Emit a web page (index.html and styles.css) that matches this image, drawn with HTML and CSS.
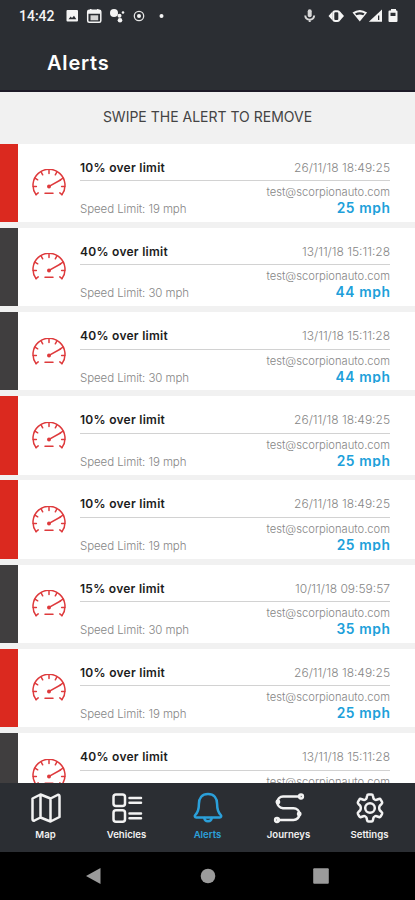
FILE: index.html
```html
<!DOCTYPE html>
<html lang="en">

<head>
    <meta charset="UTF-8">
    <meta name="viewport" content="width=device-width, initial-scale=1.0">
    <title>Alerts</title>
    <link rel="stylesheet" href="styles.css">
</head>

<body>
    <!-- shared speedometer icon -->
    <svg class="defs" width="0" height="0">
        <symbol id="gauge" viewBox="0 0 34 28">
            <g fill="none" stroke="#de3a3c" stroke-width="1.5" stroke-linecap="round">
                <path d="M4 25.6A16 16 0 1 1 30 25.6" />
                <path d="M4 25.6l2.2-1.7M30 25.6l-2.2-1.7M1.2 17.5h3.2M32.8 17.5h-3.2M3 9.2l2.7 1.6M9.2 3.2l1.5 2.6M17 1v3.6M24.8 3.2l-1.5 2.6M31 9.2l-2.7 1.6" />
                <path d="M17.5 17.2L28.5 11M13 24.3h8" />
            </g>
            <circle cx="17" cy="17.6" r="2" fill="#de3a3c" />
        </symbol>
    </svg>

    <div class="phone">
        <div class="status">
            <span class="time">14:42</span>
            <svg class="status-left" width="100" height="16" viewBox="0 0 100 16" fill="#f4f4f4">
                <path fill-rule="evenodd" d="M1.500 2h9.500q1 0 1 1v9.500q0 1-1 1H1.500q-1 0-1-1V3q0-1 1-1zM2.500 11.300h7.800L8 7.800l-2 2.300-1.300-1.500z" />
                <rect x="21.700" y="2.200" width="13.100" height="12" rx="1.500" fill="none" stroke="#f4f4f4" stroke-width="1.500" />
                <path d="M22 3h12.500v2.700H22zM24 1h1.500v2H24zM31 1h1.500v2H31z" />
                <path d="M24.500 7.300h7.700v5h-7.700z" fill="#d4d4d4" />
                <circle cx="48" cy="5" r="4" />
                <circle cx="53.500" cy="7.800" r="2" />
                <circle cx="57" cy="4.500" r="1.300" />
                <circle cx="54" cy="12.300" r="2.300" />
                <circle cx="73" cy="8" r="4.700" fill="none" stroke="#e4e4e4" stroke-width="1.300" />
                <circle cx="73" cy="8" r="2" />
                <circle cx="95.500" cy="8" r="2" />
            </svg>
            <svg class="status-right" width="96" height="16" viewBox="0 0 96 16" fill="#f4f4f4">
                <rect x="4.700" y="1.200" width="4" height="8" rx="2" fill="#d8d8d8" />
                <path d="M2.200 7.500q.5 4.200 4.500 4.200t4.500-4.200M6.700 11.500v2.500" fill="none" stroke="#d8d8d8" stroke-width="2" />
                <path d="M25.500 8l4-4.500v9zM41 8l-4-4.500v9z" />
                <rect x="30.300" y="3.200" width="6" height="9.800" rx="2" fill="none" stroke="#f4f4f4" stroke-width="2" />
                <path d="M49.500 4.500q7.300-5 14.600 0L56.800 13.500z" />
                <path d="M52 5.500q4.800-2.500 9.600 0l-1.400 1.800q-3.400-1.500-6.800 0z" fill="#2b2e33" />
                <path d="M65.800 13.800L79 1.500v12.300z" />
                <path d="M75 7.500h1.300v4.500H75z" fill="#2b2e33" />
                <path fill-rule="evenodd" d="M86.500 2.500H88V1h5v1.500h.5q1 0 1 1V13q0 1-1 1h-7q-1 0-1-1V3.500q0-1 1-1zM87.500 4.700V8h5V4.700z" />
            </svg>
        </div>

        <header>Alerts</header>
        <div class="hint">SWIPE THE ALERT TO REMOVE</div>

        <main class="alerts">
            <div class="alert red">
                <svg class="gauge"><use href="#gauge" /></svg>
                <div class="info">
                    <div class="top"><b>10% over limit</b><span>26/11/18 18:49:25</span></div>
                    <div class="user">test@scorpionauto.com</div>
                    <div class="bottom"><span>Speed Limit: 19 mph</span><strong>25 mph</strong></div>
                </div>
            </div>
            <div class="alert grey">
                <svg class="gauge"><use href="#gauge" /></svg>
                <div class="info">
                    <div class="top"><b>40% over limit</b><span>13/11/18 15:11:28</span></div>
                    <div class="user">test@scorpionauto.com</div>
                    <div class="bottom"><span>Speed Limit: 30 mph</span><strong>44 mph</strong></div>
                </div>
            </div>
            <div class="alert grey">
                <svg class="gauge"><use href="#gauge" /></svg>
                <div class="info">
                    <div class="top"><b>40% over limit</b><span>13/11/18 15:11:28</span></div>
                    <div class="user">test@scorpionauto.com</div>
                    <div class="bottom"><span>Speed Limit: 30 mph</span><strong>44 mph</strong></div>
                </div>
            </div>
            <div class="alert red">
                <svg class="gauge"><use href="#gauge" /></svg>
                <div class="info">
                    <div class="top"><b>10% over limit</b><span>26/11/18 18:49:25</span></div>
                    <div class="user">test@scorpionauto.com</div>
                    <div class="bottom"><span>Speed Limit: 19 mph</span><strong>25 mph</strong></div>
                </div>
            </div>
            <div class="alert red">
                <svg class="gauge"><use href="#gauge" /></svg>
                <div class="info">
                    <div class="top"><b>10% over limit</b><span>26/11/18 18:49:25</span></div>
                    <div class="user">test@scorpionauto.com</div>
                    <div class="bottom"><span>Speed Limit: 19 mph</span><strong>25 mph</strong></div>
                </div>
            </div>
            <div class="alert grey">
                <svg class="gauge"><use href="#gauge" /></svg>
                <div class="info">
                    <div class="top"><b>15% over limit</b><span>10/11/18 09:59:57</span></div>
                    <div class="user">test@scorpionauto.com</div>
                    <div class="bottom"><span>Speed Limit: 30 mph</span><strong>35 mph</strong></div>
                </div>
            </div>
            <div class="alert red">
                <svg class="gauge"><use href="#gauge" /></svg>
                <div class="info">
                    <div class="top"><b>10% over limit</b><span>26/11/18 18:49:25</span></div>
                    <div class="user">test@scorpionauto.com</div>
                    <div class="bottom"><span>Speed Limit: 19 mph</span><strong>25 mph</strong></div>
                </div>
            </div>
            <div class="alert grey">
                <svg class="gauge"><use href="#gauge" /></svg>
                <div class="info">
                    <div class="top"><b>40% over limit</b><span>13/11/18 15:11:28</span></div>
                    <div class="user">test@scorpionauto.com</div>
                </div>
            </div>
        </main>

        <nav class="tabs">
            <a class="tab">
                <svg viewBox="0 0 32 32">
                    <path d="M2.500 6.500L10.500 2.500L20.500 6.500L27.500 3Q29.500 2.300 29.500 4.500V25L20.500 29.500L10.500 25.500L4.500 28.500Q2.500 29.200 2.500 27zM10.500 2.500v23M20.500 6.500v23" />
                </svg>
                <span>Map</span>
            </a>
            <a class="tab">
                <svg viewBox="0 0 32 32">
                    <rect x="2.500" y="2.500" width="11.500" height="11.500" rx="2.500" />
                    <rect x="2.500" y="18.200" width="11.500" height="11.500" rx="2.500" />
                    <path d="M18.500 6h11.500M18.500 10.700h11.500M18.500 21.500h11.500M18.500 26.200h11.500" />
                </svg>
                <span>Vehicles</span>
            </a>
            <a class="tab active">
                <svg viewBox="0 0 32 32">
                    <path d="M16 2C10 2 6.900 6.300 6.900 12C6.900 18.500 5.500 20.700 3.400 22.800C2.200 24.200 2.800 25.500 4.300 25.500H27.700C29.200 25.500 29.800 24.200 28.600 22.800C26.500 20.700 25.100 18.500 25.100 12C25.100 6.300 22 2 16 2z" />
                    <path d="M12.300 26c.4 4.400 7 4.400 7.400 0" />
                </svg>
                <span>Alerts</span>
            </a>
            <a class="tab">
                <svg viewBox="0 0 32 32">
                    <path d="M26.500 4.500H10A6 6 0 0 0 4.300 10A6.300 6.300 0 0 0 10 16.300H20.500A6 6 0 0 1 26.500 22A6 6 0 0 1 20.500 28H5" />
                    <circle cx="28" cy="4.500" r="1.900" />
                    <circle cx="4" cy="28" r="1.900" />
                    <circle cx="4.900" cy="10" r="1.200" />
                    <circle cx="26.200" cy="22" r="1.200" />
                </svg>
                <span>Journeys</span>
            </a>
            <a class="tab">
                <svg viewBox="0 0 32 32">
                    <path d="M14.500 2.500h3q1.200 0 1.400 1.200l.5 2.300q.2 1 1.200 1.500q1 .6 2 .3l2.300-.8q1.200-.4 1.800.7l1.300 2.200q.6 1.100-.3 1.900l-1.700 1.700q-.8.800-.8 2.500t.8 2.500l1.700 1.700q.9.800.3 1.900l-1.300 2.200q-.6 1.100-1.800.7l-2.300-.8q-1-.3-2 .3q-1 .5-1.200 1.500l-.5 2.300q-.2 1.200-1.400 1.200h-3q-1.200 0-1.400-1.200l-.5-2.300q-.2-1-1.200-1.500q-1-.6-2-.3l-2.300.8q-1.200.4-1.800-.7l-1.300-2.200q-.6-1.100.3-1.900l1.700-1.700q.8-.8.800-2.500t-.8-2.500l-1.700-1.700q-.9-.8-.3-1.900l1.300-2.200q.6-1.100 1.800-.7l2.300.8q1 .3 2-.3q1-.5 1.200-1.500l.5-2.300q.2-1.200 1.400-1.200z" />
                    <circle cx="16" cy="16" r="4.800" />
                </svg>
                <span>Settings</span>
            </a>
        </nav>

        <div class="system">
            <svg width="18" height="18" viewBox="0 0 18 18"><path d="M1 9L15.500 1v16z" /></svg>
            <svg width="18" height="18" viewBox="0 0 18 18"><circle cx="9" cy="9" r="7.300" /></svg>
            <svg width="18" height="18" viewBox="0 0 18 18"><rect x="1.200" y="1.200" width="15.600" height="15.600" rx="1" /></svg>
        </div>
    </div>
</body>

</html>
```
FILE: styles.css
```css
* {
    margin: 0;
    box-sizing: border-box;
    font-family: Inter, "Liberation Sans", sans-serif;
}

.defs {
    display: block;
}

.phone {
    width: 415px;
    height: 900px;
    display: flex;
    flex-direction: column;
    overflow: hidden;
    background-color: #f1f1f1;
}

.status {
    height: 32px;
    flex-shrink: 0;
    display: flex;
    align-items: center;
    padding: 0 16px 0 19px;
    background-color: #2b2e33;
    color: #f4f4f4;
}

.time {
    width: 47px;
    font-family: Roboto, sans-serif;
    font-size: 14px;
    font-weight: 500;
}

.status-right {
    margin-left: auto;
}

header {
    height: 60px;
    flex-shrink: 0;
    padding-left: 47px;
    line-height: 62px;
    font-size: 20px;
    font-weight: 600;
    letter-spacing: 0.8px;
    color: #ffffff;
    background-color: #2b2e33;
    border-bottom: 2px solid #1e1b28;
}

.hint {
    height: 51.700px;
    flex-shrink: 0;
    line-height: 49px;
    text-align: center;
    font-size: 14px;
    color: #444444;
}

.alerts {
    height: 639.300px;
    flex-shrink: 0;
    overflow: hidden;
}

.alert {
    height: 78.400px;
    margin-bottom: 5.800px;
    display: flex;
    background-color: #ffffff;
    border-left: 18px solid;
    overflow: hidden;
}

.red {
    border-color: #db291f;
}

.grey {
    border-color: #403e3f;
}

.gauge {
    width: 34px;
    height: 28px;
    margin: 25.500px 14px 0 14px;
    flex-shrink: 0;
}

.info {
    width: 310px;
    font-size: 12px;
    color: #868686;
}

.top,
.bottom {
    display: flex;
    justify-content: space-between;
}

.top {
    height: 37.500px;
    padding-top: 9px;
    line-height: 29px;
    border-bottom: 1px solid #d2d2d2;
}

.top b {
    font-weight: 600;
    letter-spacing: 0.27px;
    color: #1c1c1c;
}

.top span,
.user,
.bottom span {
    font-weight: 300;
}

.user {
    height: 18px;
    line-height: 22px;
    font-size: 11.200px;
    text-align: right;
}

.bottom {
    line-height: 21px;
}

.bottom span {
    font-size: 11.500px;
    letter-spacing: -0.08px;
}

/* the speed box is a little short, so the descenders get cut */
.bottom strong {
    height: 15.500px;
    line-height: 19px;
    overflow: hidden;
    font-size: 13.800px;
    font-weight: 600;
    letter-spacing: 0.6px;
    margin-right: -0.5px;
    color: #209fda;
}

.tabs {
    height: 69px;
    flex-shrink: 0;
    display: flex;
    justify-content: space-between;
    padding: 9px 5px 0;
    background-color: #2b2e33;
}

.tab {
    width: 81px;
    display: flex;
    flex-direction: column;
    align-items: center;
    font-size: 9.600px;
    font-weight: 600;
    color: #f2f2f2;
}

.tab svg {
    width: 32px;
    height: 32px;
    fill: none;
    stroke: currentColor;
    stroke-width: 2.500;
    stroke-linecap: round;
    stroke-linejoin: round;
}

.tab span {
    margin-top: 4px;
    line-height: 14px;
}

.active {
    color: #2ba0da;
}

.system {
    height: 48px;
    flex-shrink: 0;
    display: flex;
    justify-content: space-between;
    align-items: center;
    padding: 0 85px;
    background-color: #000000;
}

.system svg {
    fill: #9b9b9b;
}
```
